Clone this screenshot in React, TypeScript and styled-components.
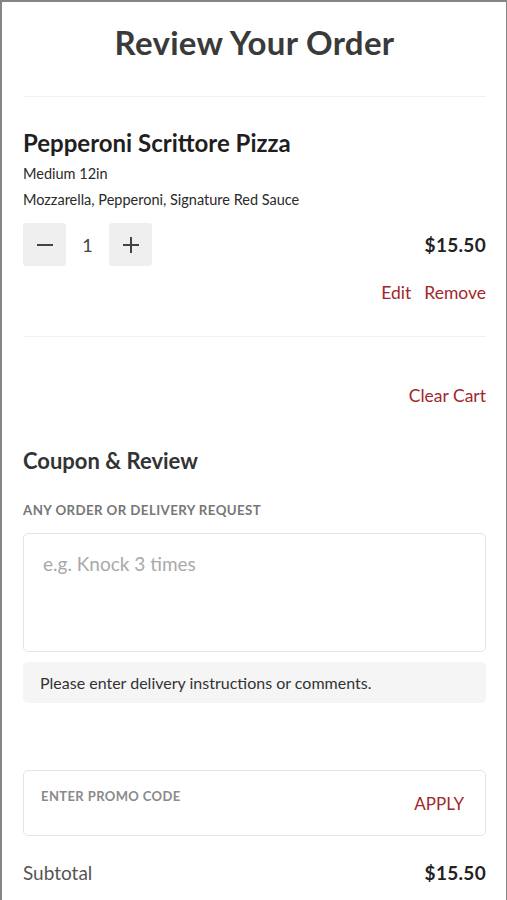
import React from 'react'
import styled, { createGlobalStyle } from 'styled-components'

const GlobalStyle = createGlobalStyle`
  html, body {
    margin: 0;
    padding: 0;
    background: #ffffff;
  }
  body {
    font-family: Lato, "Noto Sans", sans-serif;
    color: #222;
  }
  * {
    box-sizing: border-box;
  }
`

const red = '#a3262a'

const Screen = styled.div`
  width: 507px;
  height: 900px;
  overflow: hidden;
  border: 2px solid #858585;
  border-bottom: none;
  border-right-width: 1px;
  background: #fff;
  padding: 0 20px 0 21px;
`

const PageTitle = styled.h1`
  margin: 0;
  height: 94px;
  display: flex;
  align-items: center;
  justify-content: center;
  padding-bottom: 14px;
  font-size: 33px;
  font-weight: 700;
  color: #3a3a3a;
  letter-spacing: 0.3px;
`

const Divider = styled.div`
  height: 1px;
  background: #f1f1f1;
`

const Item = styled.section`
  padding: 32px 0 33px;
`

const ItemName = styled.h2`
  margin: 0 0 4px;
  font-size: 24px;
  line-height: 28px;
  font-weight: 700;
  color: #1f1f1f;
`

const Detail = styled.p`
  margin: 0;
  font-size: 14.5px;
  line-height: 26px;
  color: #2a2a2a;
`

const QtyRow = styled.div`
  display: flex;
  align-items: center;
  justify-content: space-between;
  margin-top: 10px;
`

const Stepper = styled.div`
  display: flex;
  align-items: center;
`

const StepButton = styled.button`
  width: 43px;
  height: 43px;
  border: none;
  border-radius: 3px;
  background: #efefef;
  display: flex;
  align-items: center;
  justify-content: center;
  padding: 0;
  cursor: pointer;
`

const Qty = styled.span`
  width: 43px;
  text-align: center;
  font-size: 18px;
  color: #444;
`

const Price = styled.span<{ $size?: number }>`
  font-size: ${p => p.$size ?? 19}px;
  font-weight: 700;
  color: #222;
  letter-spacing: 0.3px;
`

const ActionRow = styled.div`
  display: flex;
  justify-content: flex-end;
  gap: 13px;
  margin-top: 16px;
`

const RedLink = styled.button<{ $size?: number }>`
  border: none;
  background: none;
  padding: 0;
  font-family: inherit;
  font-size: ${p => p.$size ?? 17.5}px;
  color: ${red};
  cursor: pointer;
`

const ClearRow = styled.div`
  display: flex;
  justify-content: flex-end;
  padding-top: 48px;
`

const SectionTitle = styled.h3`
  margin: 42px 0 0;
  font-size: 22px;
  line-height: 26px;
  font-weight: 700;
  color: #333;
`

const FieldLabel = styled.div`
  margin-top: 28px;
  font-size: 13.3px;
  font-weight: 700;
  letter-spacing: 0.4px;
  color: #777;
`

const Notes = styled.textarea`
  display: block;
  width: 100%;
  height: 119px;
  margin-top: 15px;
  padding: 18px 19px;
  border: 1px solid #e4e4e4;
  border-radius: 5px;
  resize: none;
  font-family: inherit;
  font-size: 19px;
  color: #333;
  outline: none;
  &::placeholder {
    color: #a9a9a9;
  }
`

const Helper = styled.div`
  margin-top: 10px;
  height: 41px;
  display: flex;
  align-items: center;
  padding: 0 17px;
  background: #f5f5f5;
  border-radius: 5px;
  font-size: 16px;
  color: #333;
`

const PromoBox = styled.div`
  margin-top: 67px;
  height: 66px;
  display: flex;
  align-items: center;
  justify-content: space-between;
  padding: 0 21px 0 17px;
  border: 1px solid #e4e4e4;
  border-radius: 5px;
`

const PromoInput = styled.input`
  flex: 1;
  border: none;
  outline: none;
  align-self: flex-start;
  margin-top: 17px;
  padding: 0;
  font-family: inherit;
  font-size: 13px;
  font-weight: 700;
  letter-spacing: 0.4px;
  &::placeholder {
    color: #8a8a8a;
  }
`

const TotalRow = styled.div`
  display: flex;
  justify-content: space-between;
  align-items: center;
  margin-top: 25px;
`

const TotalLabel = styled.span`
  font-size: 19px;
  color: #555;
`

const Minus = () => (
  <svg width="18" height="18" viewBox="0 0 18 18">
    <path d="M1 9h16" stroke="#444" strokeWidth="2" />
  </svg>
)

const Plus = () => (
  <svg width="18" height="18" viewBox="0 0 18 18">
    <path d="M1 9h16M9 1v16" stroke="#444" strokeWidth="2" />
  </svg>
)

export default function App() {
  return (
    <>
      <GlobalStyle />
      <Screen>
        <PageTitle>Review Your Order</PageTitle>
        <Divider />
        <Item>
          <ItemName>Pepperoni Scrittore Pizza</ItemName>
          <Detail>Medium 12in</Detail>
          <Detail>Mozzarella, Pepperoni, Signature Red Sauce</Detail>
          <QtyRow>
            <Stepper>
              <StepButton aria-label="Decrease"><Minus /></StepButton>
              <Qty>1</Qty>
              <StepButton aria-label="Increase"><Plus /></StepButton>
            </Stepper>
            <Price>$15.50</Price>
          </QtyRow>
          <ActionRow>
            <RedLink>Edit</RedLink>
            <RedLink>Remove</RedLink>
          </ActionRow>
        </Item>
        <Divider />
        <ClearRow>
          <RedLink>Clear Cart</RedLink>
        </ClearRow>
        <SectionTitle>Coupon &amp; Review</SectionTitle>
        <FieldLabel>ANY ORDER OR DELIVERY REQUEST</FieldLabel>
        <Notes placeholder="e.g. Knock 3 times" />
        <Helper>Please enter delivery instructions or comments.</Helper>
        <PromoBox>
          <PromoInput placeholder="ENTER PROMO CODE" />
          <RedLink $size={17}>APPLY</RedLink>
        </PromoBox>
        <TotalRow>
          <TotalLabel>Subtotal</TotalLabel>
          <Price>$15.50</Price>
        </TotalRow>
      </Screen>
    </>
  )
}
